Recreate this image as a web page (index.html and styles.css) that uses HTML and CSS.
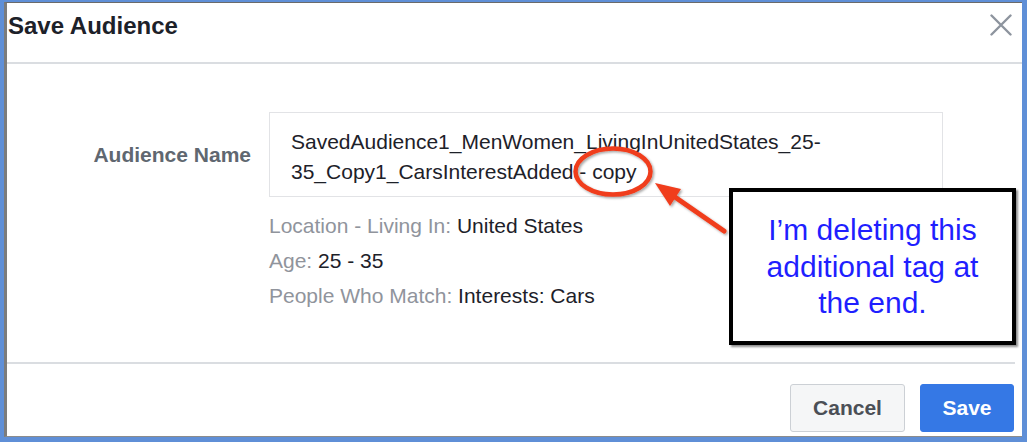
FILE: index.html
```html
<!DOCTYPE html>
<html lang="en">
<head>
<meta charset="utf-8">
<title>Save Audience</title>
<link rel="stylesheet" href="styles.css">
</head>
<body>
<div class="frame">
  <div class="dialog">
    <div class="dialog-header">
      <h1 class="dialog-title">Save Audience</h1>
      <button class="close" aria-label="Close">
        <svg width="22" height="22" viewBox="0 0 22 22"><path d="M1.5 1.5 L20.5 20.5 M20.5 1.5 L1.5 20.5" stroke="#8d949e" stroke-width="2.4" stroke-linecap="round" fill="none"/></svg>
      </button>
    </div>
    <div class="dialog-body">
      <div class="field-row">
        <label class="field-label">Audience Name</label>
        <div class="field-input">SavedAudience1_MenWomen_LivingInUnitedStates_25-35_Copy1_CarsInterestAdded - copy</div>
      </div>
      <div class="details">
        <div class="detail"><span class="detail-key">Location - Living In:</span> United States</div>
        <div class="detail"><span class="detail-key">Age:</span> 25 - 35</div>
        <div class="detail"><span class="detail-key">People Who Match:</span> Interests: Cars</div>
      </div>
    </div>
    <div class="dialog-footer">
      <button class="btn btn-cancel">Cancel</button>
      <button class="btn btn-save">Save</button>
    </div>
  </div>
</div>

<svg class="annot" width="1027" height="442" viewBox="0 0 1027 442">
  <defs>
    <filter id="sh" x="-20%" y="-20%" width="140%" height="140%">
      <feDropShadow dx="1.5" dy="1.5" stdDeviation="1" flood-color="#000" flood-opacity="0.35"/>
    </filter>
  </defs>
  <g filter="url(#sh)">
    <ellipse cx="613" cy="171.5" rx="37.5" ry="23" fill="none" stroke="#f03c1c" stroke-width="4.5"/>
    <line x1="672" y1="195" x2="724" y2="231" stroke="#f03c1c" stroke-width="5" stroke-linecap="round"/>
    <polygon points="655,183 681,189 670,206" fill="#f03c1c"/>
  </g>
</svg>
<div class="callout">I’m deleting this<br>additional tag at<br>the end.</div>
</body>
</html>
```

FILE: styles.css
```css
* { box-sizing: border-box; }

html, body {
  margin: 0;
  padding: 0;
}

body {
  width: 1027px;
  height: 442px;
  background: #5f8fd7;
  font-family: "Liberation Sans", Arial, Helvetica, sans-serif;
  position: relative;
  overflow: hidden;
  display: flex;
  flex-direction: column;
}

.frame {
  margin: 2px 5px 5px 4px;
  flex: 1;
  border-top: 1px solid #6a6a6a;
  border-left: 3px solid #7c7c7c;
  border-bottom: 1px solid #8c8c8c;
  background: #fff;
  display: flex;
}

.dialog {
  flex: 1;
  display: flex;
  flex-direction: column;
}

.dialog-header {
  height: 61px;
  border-bottom: 2px solid #dadde1;
  display: flex;
  justify-content: space-between;
  align-items: flex-start;
  padding: 9px 10px 0 1px;
}

.dialog-title {
  margin: 0;
  font-size: 24px;
  line-height: 28px;
  font-weight: bold;
  color: #1d2129;
}

.close {
  border: 0;
  background: none;
  padding: 0;
  margin-top: 2px;
  width: 22px;
  height: 22px;
  display: block;
}

.close svg { display: block; }

.dialog-body {
  height: 298px;
  padding-top: 48px;
}

.field-row {
  display: grid;
  grid-template-columns: 244px 674px;
  column-gap: 18px;
  align-items: center;
}

.field-label {
  text-align: right;
  font-size: 21px;
  font-weight: bold;
  color: #606770;
  line-height: 24px;
}

.field-input {
  height: 85px;
  border: 1px solid #e2e3e6;
  padding: 14px 30px 0 21px;
  font-size: 21px;
  line-height: 30px;
  color: #1d2129;
}

.details {
  margin-left: 262px;
  margin-top: 11px;
  font-size: 21px;
  line-height: 35px;
  color: #1d2129;
}

.detail-key { color: #90949c; }

.dialog-footer {
  margin-right: 7px;
  border-top: 2px solid #dadde1;
  padding: 20px 1px 0 0;
  display: flex;
  justify-content: flex-end;
  gap: 15px;
}

.btn {
  height: 48px;
  font-family: "Liberation Sans", Arial, Helvetica, sans-serif;
  font-size: 21px;
  font-weight: bold;
  border-radius: 3px;
  padding: 0;
}

.btn-cancel {
  width: 115px;
  background: #f5f6f7;
  border: 1px solid #ccd0d5;
  color: #4b4f56;
}

.btn-save {
  width: 94px;
  background: #3578e5;
  border: 1px solid #3578e5;
  color: #fff;
}

.annot {
  position: absolute;
  left: 0;
  top: 0;
  pointer-events: none;
}

.callout {
  position: absolute;
  left: 729px;
  top: 188px;
  width: 287px;
  height: 157px;
  background: #fff;
  border: 4px solid #000;
  box-shadow: 2px 2px 2px rgba(0, 0, 0, 0.45);
  padding-top: 20px;
  text-align: center;
  font-family: "Liberation Sans", Arial, Helvetica, sans-serif;
  font-size: 30px;
  line-height: 36.6px;
  color: #1f1fff;
}
```
